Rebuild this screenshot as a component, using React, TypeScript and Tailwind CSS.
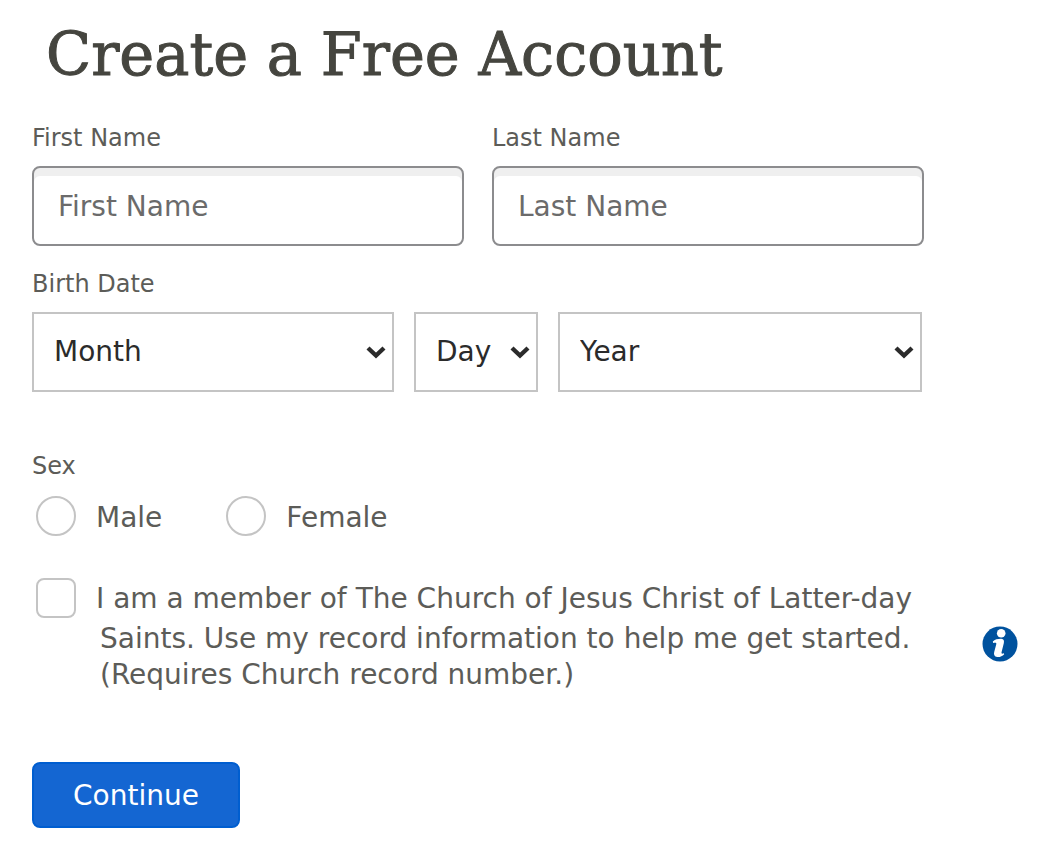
import type { ReactNode } from 'react';

const MONTHS = [
  'January', 'February', 'March', 'April', 'May', 'June',
  'July', 'August', 'September', 'October', 'November', 'December',
];
const DAYS = Array.from({ length: 31 }, (_, i) => String(i + 1));
const YEARS = Array.from({ length: 100 }, (_, i) => String(2024 - i));

interface TextFieldProps {
  id: string;
  label: string;
}

function TextField({ id, label }: TextFieldProps) {
  return (
    <div className="flex flex-col gap-3">
      <label htmlFor={id} className="text-2xl leading-8">
        {label}
      </label>
      <input
        id={id}
        type="text"
        placeholder={label}
        className="h-20 w-full rounded-lg border-2 border-[#8c8c8e] bg-white px-6 text-[28px] text-[#2b2b2b] shadow-[inset_0_8px_0_#efefef] placeholder:text-[#6b6b6b]"
      />
    </div>
  );
}

interface DateSelectProps {
  name: string;
  options: string[];
}

function DateSelect({ name, options }: DateSelectProps) {
  return (
    <div className="grid items-center">
      <select
        aria-label={name}
        className="col-start-1 row-start-1 h-20 w-full appearance-none border-2 border-[#c4c4c4] bg-white pl-5 text-[28px] text-[#2b2b2b]"
      >
        <option>{name}</option>
        {options.map((option) => (
          <option key={option}>{option}</option>
        ))}
      </select>
      <svg
        viewBox="0 0 20 14"
        aria-hidden="true"
        className="pointer-events-none z-10 col-start-1 row-start-1 mr-2 h-[14px] w-5 justify-self-end"
      >
        <path d="M2 3 L10 10.5 L18 3" fill="none" stroke="#2b2b2b" strokeWidth="4.4" />
      </svg>
    </div>
  );
}

function SexOption({ children }: { children: ReactNode }) {
  return (
    <label className="flex items-center gap-5 text-[28px] leading-9">
      <input
        type="radio"
        name="sex"
        className="size-10 appearance-none rounded-full border-2 border-[#c4c4c4] bg-white checked:border-[12px] checked:border-[#1466d2]"
      />
      <span className="pt-1">{children}</span>
    </label>
  );
}

function InfoIcon() {
  return (
    <svg viewBox="0 0 36 36" aria-hidden="true" className="size-9">
      <circle cx="18" cy="18" r="17.5" fill="#00529e" />
      <circle cx="19.2" cy="7.2" r="4.3" fill="#fff" />
      <path
        d="M10.8 15.4 C12.6 13.4 16.5 12.7 19.3 12.8 C21.8 12.9 22.3 14.8 21.8 17.2 L19.6 26 C19.2 27.8 20 28 21.8 27.2 L22.2 28.2 C20.4 30.3 17.6 31.3 15.2 31 C12.3 30.6 11.5 28.6 12.2 26 L14.2 18.6 C14.8 16.6 13.8 16.4 11.2 16.9 Z"
        fill="#fff"
      />
    </svg>
  );
}

export default function App() {
  return (
    <main className="min-h-screen bg-white px-8 pt-5 pb-9 font-['DejaVu_Sans',Verdana,sans-serif] text-[#5c5c58]">
      <h1 className="pl-[14px] font-['DejaVu_Serif',serif] text-[59px] leading-[70px] text-[#45453f] [-webkit-text-stroke:1px_#45453f]">
        Create a Free Account
      </h1>

      <form>
        {/* Name */}
        <div className="mt-8 grid max-w-[892px] grid-cols-2 gap-7">
          <TextField id="first-name" label="First Name" />
          <TextField id="last-name" label="Last Name" />
        </div>

        {/* Birth date */}
        <fieldset className="mt-[22px] max-w-[890px]">
          <legend className="text-2xl leading-8">Birth Date</legend>
          <div className="mt-3 grid grid-cols-[362fr_124px_364fr] gap-5">
            <DateSelect name="Month" options={MONTHS} />
            <DateSelect name="Day" options={DAYS} />
            <DateSelect name="Year" options={YEARS} />
          </div>
        </fieldset>

        {/* Sex */}
        <fieldset className="mt-[58px]">
          <legend className="text-2xl leading-8">Sex</legend>
          <div className="mt-[14px] flex gap-16 pl-1">
            <SexOption>Male</SexOption>
            <SexOption>Female</SexOption>
          </div>
        </fieldset>

        {/* Membership */}
        <div className="mt-[42px] flex items-start justify-between gap-4 pr-[6px] pl-1">
          <label className="flex items-start gap-5 text-[28px]">
            <input
              type="checkbox"
              className="size-10 shrink-0 appearance-none rounded-lg border-2 border-[#c4c4c4] bg-white checked:border-[#1466d2] checked:bg-[#1466d2]"
            />
            <span className="pt-px">
              <span className="block leading-10">
                I am a member of The Church of Jesus Christ of Latter-day
              </span>
              <span className="block pl-1 leading-10">
                Saints. Use my record information to help me get started.
              </span>
              <span className="block pl-1 leading-8">(Requires Church record number.)</span>
            </span>
          </label>
          <button type="button" aria-label="More information" className="mt-12 shrink-0">
            <InfoIcon />
          </button>
        </div>

        <button
          type="submit"
          className="mt-[71px] h-[66px] w-52 rounded-lg border-2 border-[#005ed0] bg-[#1466d2] pt-0.5 text-[28px] text-white"
        >
          Continue
        </button>
      </form>
    </main>
  );
}
